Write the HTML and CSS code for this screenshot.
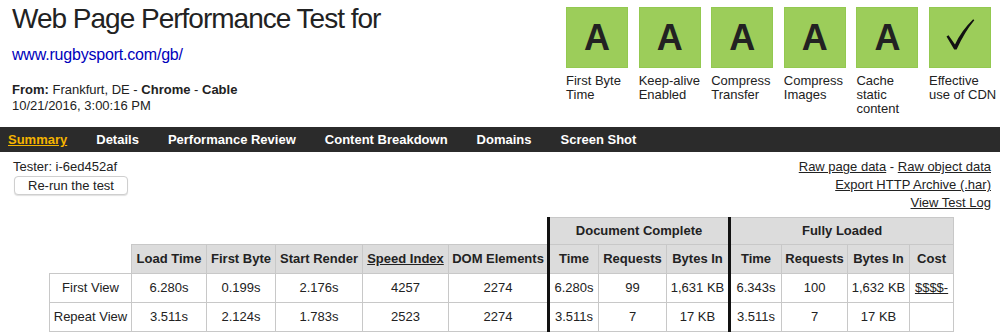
FILE: index.html
```html
<!DOCTYPE html>
<html lang="en">
<head>
  <meta charset="UTF-8">
  <meta name="viewport" content="width=device-width, initial-scale=1.0">
  <title>Web Page Performance Test</title>
  <link rel="stylesheet" href="styles.css">
</head>
<body>
  <!-- Header: test info and grades -->
  <div class="header">
    <div class="test-info">
      <h1>Web Page Performance Test for</h1>
      <a class="url" href="#">www.rugbysport.com/gb/</a>
      <p class="from"><b>From:</b> Frankfurt, DE - <b>Chrome</b> - <b>Cable</b></p>
      <p class="date">10/21/2016, 3:00:16 PM</p>
    </div>

    <div class="grades">
      <a class="help-link" href="#">Need help improving?</a>
      <ul class="grade-list">
        <li class="grade">
          <div class="grade-box">A</div>
          <div class="grade-label">First Byte Time</div>
        </li>
        <li class="grade">
          <div class="grade-box">A</div>
          <div class="grade-label">Keep-alive Enabled</div>
        </li>
        <li class="grade">
          <div class="grade-box">A</div>
          <div class="grade-label">Compress Transfer</div>
        </li>
        <li class="grade">
          <div class="grade-box">A</div>
          <div class="grade-label">Compress Images</div>
        </li>
        <li class="grade">
          <div class="grade-box">A</div>
          <div class="grade-label">Cache static content</div>
        </li>
        <li class="grade">
          <div class="grade-box">
            <svg class="check" width="62" height="61" viewBox="0 0 62 61">
              <path d="M17.5 29.5 L19.5 28.2 L26 37.5 Q32 24 44.2 12.2 L45.3 13.2 Q35.5 25 27.6 42.5 L25.2 42.5 Z" fill="#111"/>
            </svg>
          </div>
          <div class="grade-label">Effective use of CDN</div>
        </li>
      </ul>
    </div>
  </div>

  <!-- Tabs -->
  <nav class="tabs">
    <a class="tab active" href="#">Summary</a>
    <a class="tab" href="#">Details</a>
    <a class="tab" href="#">Performance Review</a>
    <a class="tab" href="#">Content Breakdown</a>
    <a class="tab" href="#">Domains</a>
    <a class="tab" href="#">Screen Shot</a>
  </nav>

  <div class="test-meta">
    <div class="tester">
      <div>Tester: i-6ed452af</div>
      <button class="rerun" type="button">Re-run the test</button>
    </div>
    <div class="export-links">
      <div><a href="#">Raw page data</a> - <a href="#">Raw object data</a></div>
      <div><a href="#">Export HTTP Archive (.har)</a></div>
      <div><a href="#">View Test Log</a></div>
    </div>
  </div>

  <!-- Results table -->
  <table class="results">
    <colgroup>
      <col class="c-label">
      <col class="c-load">
      <col class="c-ttfb">
      <col class="c-render">
      <col class="c-si">
      <col class="c-dom">
      <col class="c-dtime">
      <col class="c-dreq">
      <col class="c-dbytes">
      <col class="c-ftime">
      <col class="c-freq">
      <col class="c-fbytes">
      <col class="c-cost">
    </colgroup>
    <thead>
      <tr class="group-row">
        <th class="blank" colspan="6"></th>
        <th class="group divider" colspan="3">Document Complete</th>
        <th class="group divider" colspan="4">Fully Loaded</th>
      </tr>
      <tr>
        <th class="blank"></th>
        <th>Load Time</th>
        <th>First Byte</th>
        <th>Start Render</th>
        <th><a href="#">Speed Index</a></th>
        <th>DOM Elements</th>
        <th class="divider">Time</th>
        <th>Requests</th>
        <th>Bytes In</th>
        <th class="divider">Time</th>
        <th>Requests</th>
        <th>Bytes In</th>
        <th>Cost</th>
      </tr>
    </thead>
    <tbody>
      <tr>
        <td>First View</td>
        <td>6.280s</td>
        <td>0.199s</td>
        <td>2.176s</td>
        <td>4257</td>
        <td>2274</td>
        <td class="divider">6.280s</td>
        <td>99</td>
        <td>1,631 KB</td>
        <td class="divider">6.343s</td>
        <td>100</td>
        <td>1,632 KB</td>
        <td><a class="cost" href="#">$$$$-</a></td>
      </tr>
      <tr>
        <td>Repeat View</td>
        <td>3.511s</td>
        <td>2.124s</td>
        <td>1.783s</td>
        <td>2523</td>
        <td>2274</td>
        <td class="divider">3.511s</td>
        <td>7</td>
        <td>17 KB</td>
        <td class="divider">3.511s</td>
        <td>7</td>
        <td>17 KB</td>
        <td></td>
      </tr>
    </tbody>
  </table>
</body>
</html>
```

FILE: styles.css
```css
/* Page basics */
body {
  margin: 0;
  font-family: "Liberation Sans", Arial, sans-serif;
  font-size: 13px;
  color: #222;
  background-color: #fff;
}

a {
  color: #222;
}

/* Header */
.header {
  display: flex;
  justify-content: space-between;
  align-items: flex-start;
  padding: 0 9px 0 12px;
}

.test-info h1 {
  margin: 2px 0 0;
  font-size: 28px;
  line-height: 34px;
  letter-spacing: -1px;
  font-weight: normal;
}

.url {
  display: block;
  margin-top: 8px;
  font-size: 16px;
  line-height: 22px;
  letter-spacing: -0.2px;
  color: #0000bb;
  text-decoration: none;
}

.from,
.date {
  margin: 0;
  line-height: 16px;
}

.from {
  margin-top: 16px;
}

/* Grades */
.grades {
  display: flex;
  flex-direction: column;
  align-items: flex-end;
}

.help-link {
  display: block;
  margin: -14px 0 7px;
  line-height: 14px;
}

.grade-list {
  display: flex;
  gap: 10.6px;
  margin: 0;
  padding: 0;
  list-style: none;
}

.grade {
  width: 62px;
}

.grade-box {
  width: 62px;
  height: 61px;
  box-sizing: border-box;
  border: 1px solid #93c950;
  background-color: #9ccd5a;
  display: flex;
  justify-content: center;
  align-items: center;
  font-size: 36px;
  font-weight: bold;
  color: #222;
}

.check {
  display: block;
  margin: -1px;
}

.grade-label {
  width: 68px;
  margin-top: 6px;
  line-height: 14px;
}

/* Tabs */
.tabs {
  display: flex;
  gap: 29px;
  margin-top: 11px;
  padding-left: 8px;
  height: 25px;
  background-color: #2b2b2b;
}

.tab {
  color: #fff;
  font-weight: bold;
  line-height: 25px;
  text-decoration: none;
}

.tab.active {
  color: #f5b400;
  text-decoration: underline;
}

/* Tester row */
.test-meta {
  display: flex;
  justify-content: space-between;
  padding: 6px 9px 0 13px;
  line-height: 18px;
}

.rerun {
  display: block;
  margin-left: 1px;
  width: 114px;
  height: 19px;
  padding: 0;
  border: 1px solid #cfcfcf;
  border-radius: 4px;
  background-color: #fff;
  box-shadow: 0 1px 1px rgba(0, 0, 0, 0.12);
  font-family: inherit;
  font-size: 13px;
  color: #222;
}

.export-links {
  text-align: right;
}

/* Results table */
.results {
  width: 904px;
  margin: 5px 0 0 49px;
  table-layout: fixed;
  border-collapse: collapse;
}

.results th,
.results td {
  border: 1px solid #c8c8c8;
  padding: 6px 3px;
  line-height: 16px;
  text-align: center;
  white-space: nowrap;
}

.results th {
  background-color: #dcdcdc;
}

.results th.blank {
  border: none;
  background: none;
}

.results .group-row th {
  padding: 5px 3px;
}

.results .divider {
  border-left: 3px solid #111;
}

.c-label { width: 82px; }
.c-load { width: 75px; }
.c-ttfb { width: 69px; }
.c-render { width: 87px; }
.c-si { width: 86px; }
.c-dom { width: 100px; }
.c-dtime { width: 50px; }
.c-dreq { width: 68px; }
.c-dbytes { width: 63px; }
.c-ftime { width: 52px; }
.c-freq { width: 66px; }
.c-fbytes { width: 62px; }
.c-cost { width: 44px; }
```
